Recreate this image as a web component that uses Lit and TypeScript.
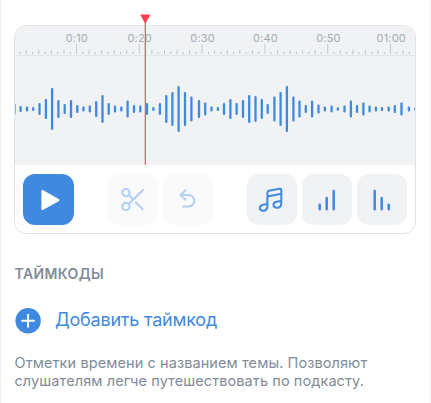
import { LitElement, html, svg, css } from "lit";
import { customElement } from "lit/decorators.js";

const LABELS = ["0:10", "0:20", "0:30", "0:40", "0:50", "01:00"];

// [centre x, height] of every bar, in waveform coordinates
const BARS: [number, number][] = [
  [-0.6, 11], [5.6, 6], [12, 5], [18.2, 4], [24.5, 12], [30.9, 20], [37.1, 42], [43.4, 18], [49.7, 10],
  [56, 18], [62.3, 8], [68.4, 5], [74.8, 7], [81.2, 16], [87.5, 28], [93.7, 12], [100, 7], [106.3, 5],
  [112.6, 17], [119, 8], [125.3, 7], [132, 12], [138.4, 4], [144.9, 12], [151.3, 28], [157.4, 34],
  [163.6, 46], [170, 34], [176.4, 25], [184, 18], [190.2, 13], [196.5, 5], [202.9, 4], [209, 12],
  [215.4, 20], [221.6, 12], [228, 18], [234.2, 28], [240.5, 26], [246.8, 20], [252.7, 10], [259.4, 25],
  [265.6, 34], [271.9, 46], [278.4, 25], [284.5, 17], [290.8, 8], [297.1, 17], [303.5, 9], [309.9, 5],
  [316.6, 7], [322.9, 3.5], [329.5, 7], [335.9, 17], [342, 8], [348.4, 13], [354.6, 7], [360.9, 5],
  [367, 4], [373.7, 5], [379.8, 8], [386.5, 13], [393.9, 5], [400.3, 3],
];

@customElement("app-root")
export class AppRoot extends LitElement {
  static styles = css`
    :host {
      display: block;
      box-sizing: border-box;
      height: 403px;
      padding: 25px 14px 0 13px;
      border-left: 1px solid #f0f1f3;
      border-right: 1px solid #eeeff3;
      background: #fff;
      overflow: hidden;
      font-family: Inter, "Noto Sans", sans-serif;
      color: #818c99;
    }
    .editor {
      position: relative;
      box-sizing: border-box;
      width: 402px;
      height: 209px;
      border: 1px solid #e1e3e6;
      border-radius: 12px;
    }
    .track {
      height: 139px;
      background: #f1f2f4;
      border-radius: 11px 11px 0 0;
      overflow: hidden;
    }
    .labels {
      display: grid;
      grid-template-columns: repeat(6, 62.9px);
      height: 18px;
      padding-left: 30.4px;
      font-size: 11px;
      line-height: 24px;
      letter-spacing: 0.2px;
      text-align: center;
      color: #a3abb5;
    }
    svg { display: block; }
    .ruler { border-bottom: 1px solid #e3e5e8; }
    .playhead { position: absolute; left: 124px; top: -12px; }
    .tools {
      display: flex;
      gap: 5px;
      padding: 9px 8px;
    }
    .btn {
      display: flex;
      box-sizing: border-box;
      width: 50px;
      height: 51px;
      padding: 0;
      border: 0;
      border-radius: 12px;
      background: #f1f2f4;
      align-items: center;
      justify-content: center;
      color: #3f8ae0;
    }
    .play { width: 50.5px; margin: 0 29.2px 0 0.4px; background: #3f8ae0; color: #fff; }
    .off { background: #fafafa; color: #b2d0f3; }
    .undo { margin-right: 28.5px; }
    .title {
      margin: 31px 0 0 0.5px;
      font-size: 14px;
      line-height: 17px;
      font-weight: 600;
      letter-spacing: 0.4px;
    }
    .add {
      display: flex;
      align-items: center;
      gap: 14px;
      margin: 25px 0 0 1px;
      height: 28px;
      font-size: 18px;
      letter-spacing: -0.21px;
      color: #3f8ae0;
    }
    .add span { line-height: 24px; margin-top: -2px; }
    .hint {
      margin: 19px 0 0 0.5px;
      font-size: 14.5px;
      line-height: 18px;
      letter-spacing: 0.09px;
      white-space: nowrap;
    }
  `;

  private ticks() {
    return Array.from({ length: 63 }, (_, i) => {
      const x = 5 + i * 6.28;
      const major = i % 10 === 9;
      const h = major ? 10 : i % 2 ? 4 : 2;
      return x < 398
        ? svg`<rect x=${x - 0.5} y=${10 - h} width="1" height=${h} fill=${major ? "#c5c9cf" : "#bcc1c8"} />`
        : null;
    });
  }

  render() {
    return html`
      <section class="editor">
        <div class="track">
          <div class="labels">${LABELS.map((t) => html`<span>${t}</span>`)}</div>
          <svg class="ruler" width="400" height="11">${this.ticks()}</svg>
          <svg width="400" height="109">
            ${BARS.map(
              ([x, h]) => svg`<rect x=${x - 1.15} y=${53 - h / 2} width="2.3" height=${h} rx="1" fill="#3f8ae0" />`
            )}
          </svg>
        </div>
        <svg class="playhead" width="13" height="151">
          <rect x="5.7" y="4" width="1.3" height="147" fill="#ff3347" opacity=".8" />
          <path d="M1.2.5h10.2L6.9 8.8q-.6.8-1.2 0z" fill="#ff3e50" />
        </svg>
        <div class="tools">
          <button class="btn play" aria-label="Play">
            <svg width="28" height="28" viewBox="0 0 28 28">
              <path d="M6.4 5.2v17.6c0 1.1.9 1.5 1.8 1l15.5-8.6c1-.6 1-1.7 0-2.3L8.2 4.2c-.9-.5-1.8-.1-1.8 1z" fill="currentColor" />
            </svg>
          </button>
          <button class="btn off" aria-label="Cut">
            <svg width="28" height="28" viewBox="0 0 28 28" fill="none" stroke="currentColor" stroke-width="2.1" stroke-linecap="round">
              <circle cx="7" cy="6.6" r="3.6" /><circle cx="7" cy="20.4" r="3.6" />
              <path d="M9.8 17.9 24 4.1M9.8 9.1l3.7 3.6M16.9 16.5l6.8 6.8" />
            </svg>
          </button>
          <button class="btn off undo" aria-label="Undo">
            <svg width="28" height="28" viewBox="0 0 28 28" fill="none" stroke="currentColor" stroke-width="2" stroke-linecap="round" stroke-linejoin="round">
              <path d="M11.5 4.3 6.3 9l5.2 4.7M6.5 9h8.1a5.7 5.7 0 0 1 0 11.4H9" />
            </svg>
          </button>
          <button class="btn" aria-label="Music">
            <svg width="28" height="28" viewBox="0 0 28 28" fill="none" stroke="currentColor" stroke-width="2" stroke-linejoin="round">
              <path d="M9.4 20V6.4c0-1 .5-1.5 1.4-1.7l10.7-2c1.1-.2 1.8.4 1.8 1.5V17c0 3.2-1.5 4.8-4.2 4.8-2 0-3.6-1.1-3.6-3.1 0-1.8 1.3-2.7 3.1-3l4.7-.8M9.4 10.4l13.9-2.6M9.4 17.9l-4.3.8c-2 .4-3.3 1.4-3.3 3.1 0 2 1.5 3 3.4 3 2.7 0 4.2-1.6 4.2-4.8" />
            </svg>
          </button>
          <button class="btn" aria-label="Fade in">
            <svg width="28" height="28" viewBox="0 0 28 28" stroke="currentColor" stroke-width="2.5" stroke-linecap="round">
              <path d="M6.7 18.8v4.4M13.7 12v11.2M20.7 5v18.2" />
            </svg>
          </button>
          <button class="btn" aria-label="Fade out">
            <svg width="28" height="28" viewBox="0 0 28 28" stroke="currentColor" stroke-width="2.5" stroke-linecap="round">
              <path d="M6.7 5v18.2M13.7 12v11.2M20.7 18.8v4.4" />
            </svg>
          </button>
        </div>
      </section>
      <h2 class="title">ТАЙМКОДЫ</h2>
      <div class="add">
        <svg width="26" height="26" viewBox="0 0 26 26">
          <circle cx="13.1" cy="12.8" r="12.7" fill="#3f8ae0" />
          <path d="M13.1 6.8v12M7.1 12.8h12" stroke="#fff" stroke-width="1.9" stroke-linecap="round" />
        </svg>
        <span>Добавить таймкод</span>
      </div>
      <div class="hint">Отметки времени с названием темы. Позволяют<br />слушателям легче путешествовать по подкасту.</div>
    `;
  }
}
